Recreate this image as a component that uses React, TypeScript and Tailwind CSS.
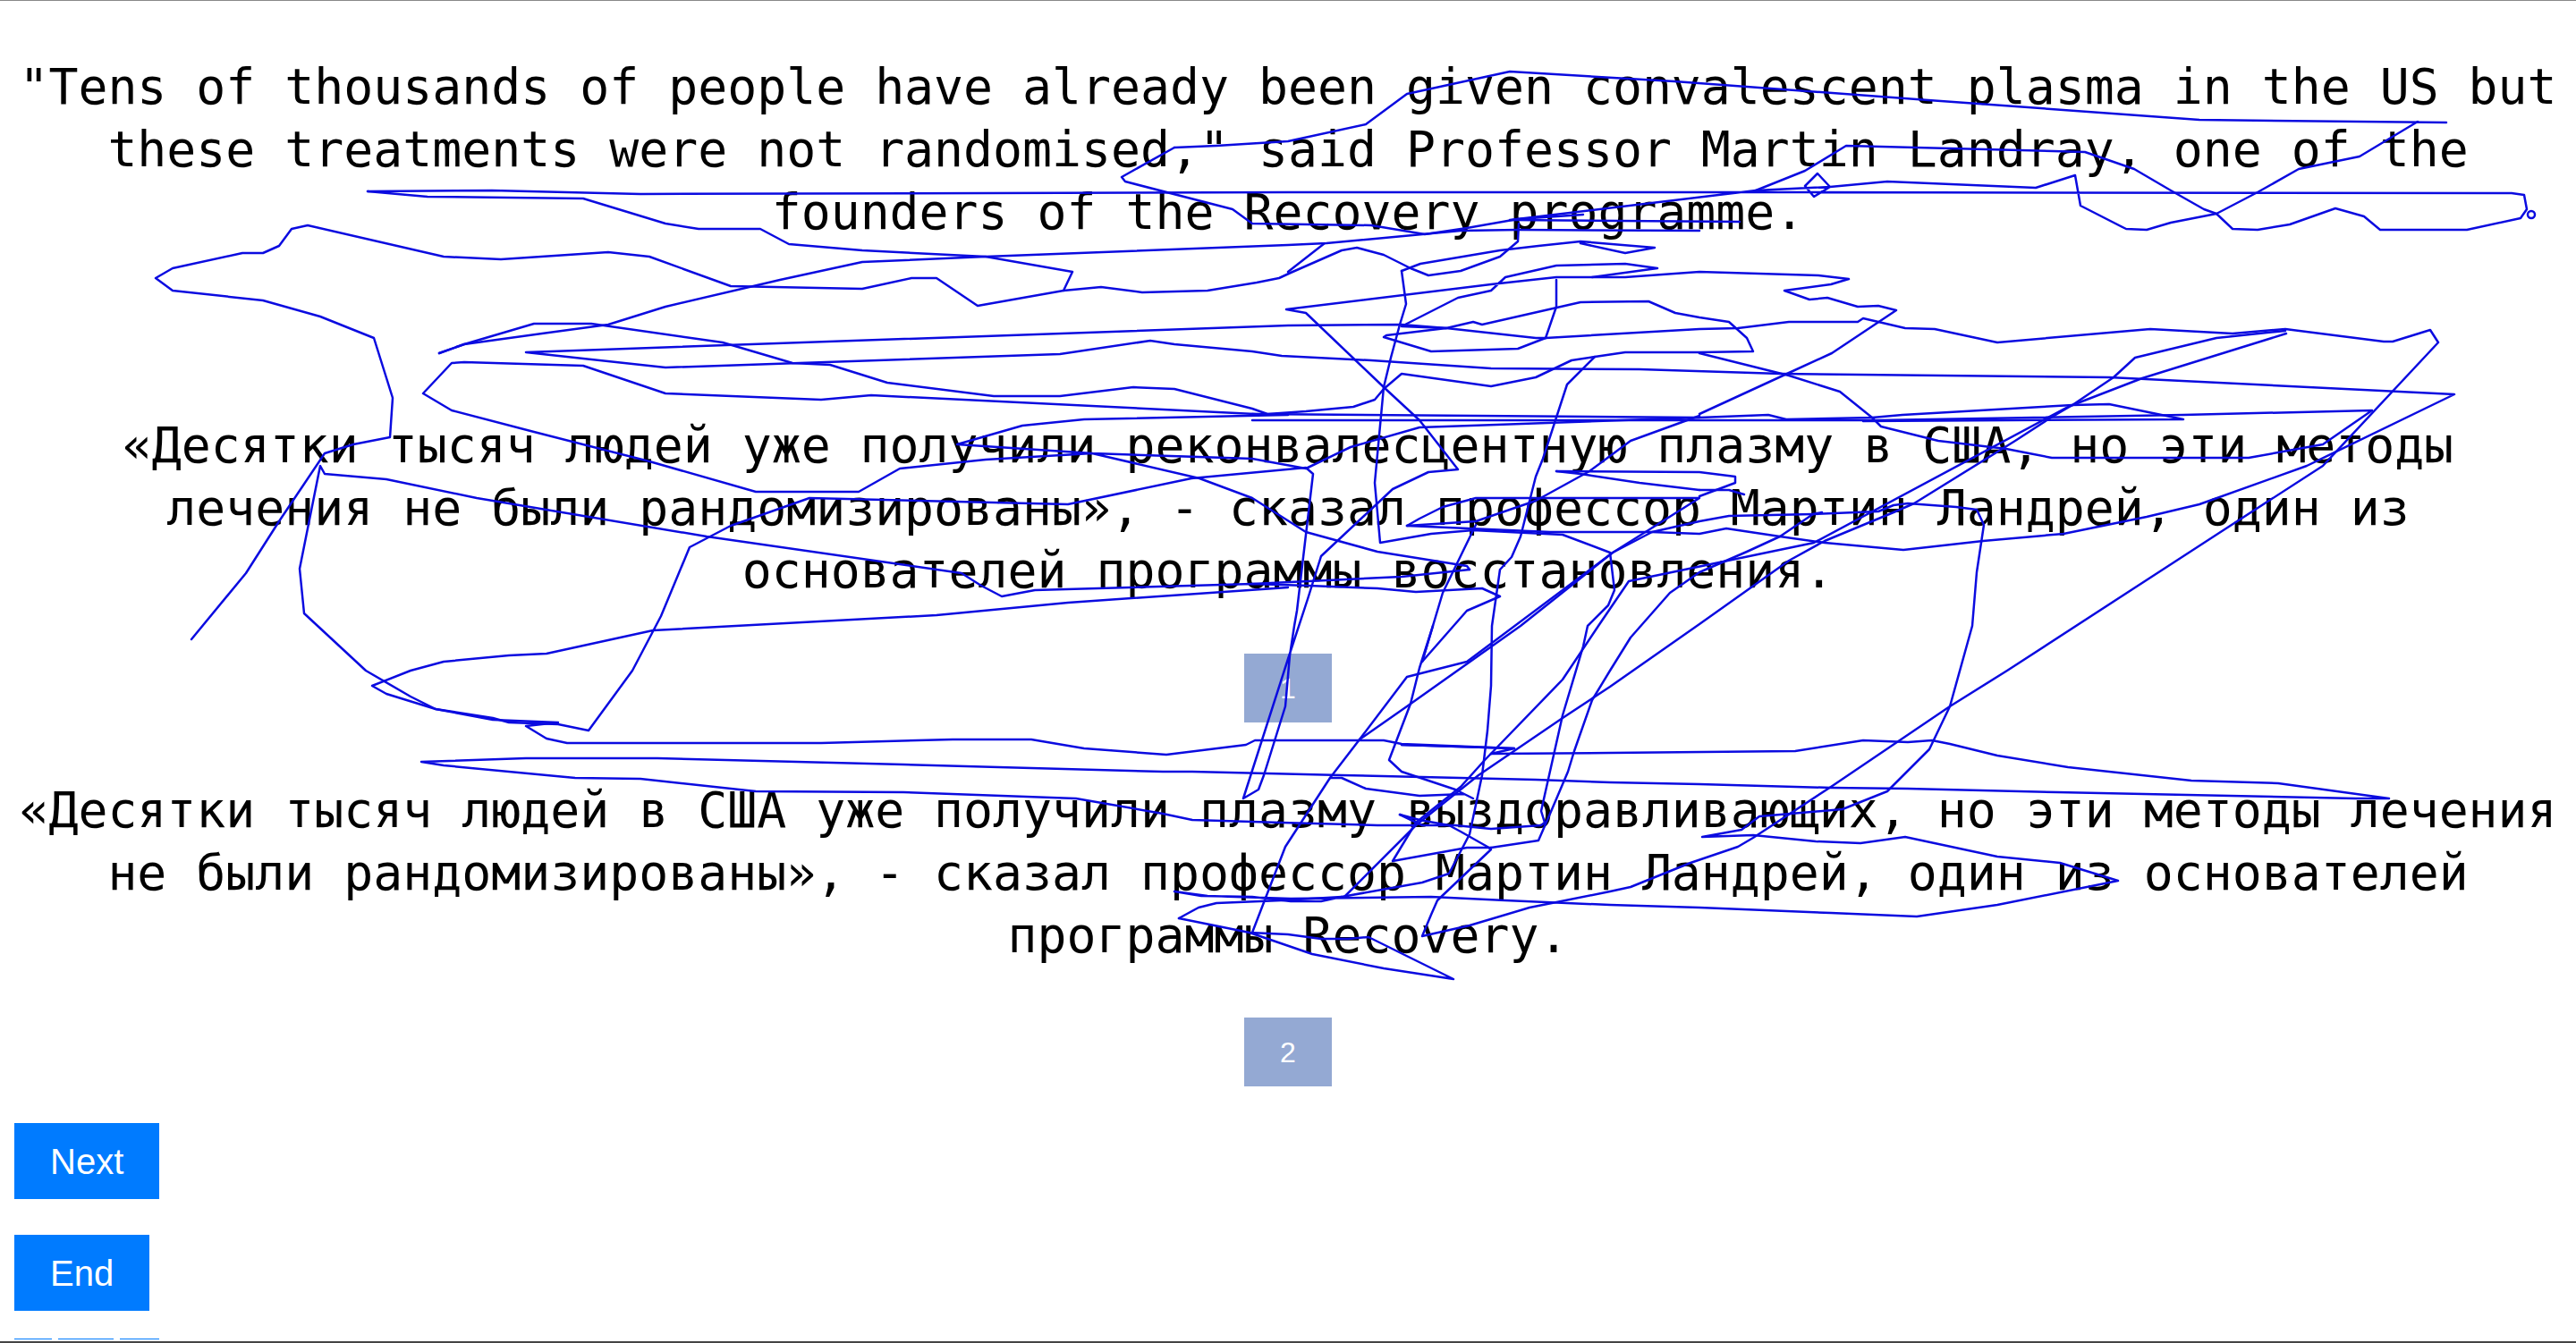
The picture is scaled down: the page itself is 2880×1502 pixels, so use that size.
// Sentence cards with a freehand scribble drawn over them
const SCRIBBLE: string[] = [
	'411,214 550,213 716,217 1440,215 1963,215 2808,216 2822,218 2825,234 2818,244 2758,257 2661,257 2643,242 2611,233 2560,251 2524,257 2496,256 2478,239 2427,249 2400,257 2377,256 2326,230 2320,196 2276,210 2110,203 2046,209 2032,194 2018,208 2028,220 2046,209 1963,213 1688,246 1945,248',
	'2703,136 2638,175 2570,189 2524,215 2478,239 2464,234 2427,213 2386,189 2331,170 2064,163 2018,191 1963,213',
	'1313,165 1360,163 1440,158 1527,139 1573,105 1688,80 1872,91 2156,112 2459,134 2735,137',
	'1313,165 1254,198 1258,203 1378,234 1400,250 1533,252 1593,262 1640,255 1697,245 1770,240',
	'491,395 519,385 606,373 680,363 744,343 872,313 964,293 1102,287 1440,274 1483,272 1633,258 1697,257 1900,258',
	'491,395 519,385 597,362 661,362 808,383 886,406 928,408 992,428 1111,443 1185,443 1267,433 1313,435 1400,457 1417,463 1460,460 1513,455 1537,447 1547,435 1567,418 1617,425 1667,432 1717,422 1757,403 1783,399 1817,394 1900,394 1960,393 1953,378 1933,360 1900,355 1873,350 1843,337 1767,338 1657,363 1647,360 1617,367 1567,365 1630,333 1667,325 1683,310 1740,297 1817,295 1853,300 1780,310 1740,310 1667,318 1438,346 1460,350 1547,433 1587,470 1630,525 1597,528 1557,547 1477,622 1462,670 1440,737 1390,893 1407,883 1413,867 1437,790 1442,733 1447,700 1450,683 1468,530 1460,523 1332,535 1194,564 905,557 817,588 771,612 739,689 707,750 658,817 624,810 569,808 551,803 487,793 432,776 416,767 459,750 496,740 569,733 611,731 730,705 1047,688 1194,674 1440,657',
	'411,214 478,220 652,222 744,250 781,256 850,256 882,273 964,280 1102,287 1199,304 1189,325 1093,342 1047,311 1019,311 964,323 817,320 726,287 680,282 560,290 496,287 344,252 326,256 312,275 294,283 271,283 193,300 174,311 193,325 294,336 358,354 418,378 439,445 436,489 395,497 363,507 312,583 275,641 214,715',
	'1189,325 1231,321 1277,327 1350,325 1405,316 1430,311 1443,305 1500,280 1517,277 1547,285 1577,300 1597,308 1633,303 1677,287 1697,270 1698,250',
	'1440,304 1481,272',
	'1567,303 1588,295 1677,280 1720,275 1767,270 1850,277 1817,283 1767,272',
	'1567,303 1572,340 1565,363 1555,400 1547,433 1537,540 1543,607 1600,597 1647,593 1747,598 1800,618 1805,660 1798,677 1775,700 1770,723 1747,800 1723,907 1727,920 1723,923 1667,927 1627,923 1590,923 1565,911',
	'1783,399 1752,430 1725,513 1717,533 1700,600 1690,623 1677,637 1668,700 1667,767 1663,817 1657,867 1643,933 1620,977 1590,987 1500,1003 1477,1008 1443,1008 1400,1003 1343,1002 1313,997 1350,1002 1443,1005 1600,1003 1683,1007 1800,1012 1900,1015 2047,1021 2143,1025 2233,1012 2368,985 2303,965 2233,958 2130,936 2080,943 2030,941 1960,934 1903,936 1947,928 1967,913 2060,905 2110,885 2157,838 2180,790 2205,700 2210,640 2218,587 2210,570 2187,567 2133,563 2117,565 2100,572 2027,575 1933,577 1900,583 1847,595 1803,618 1640,740 1573,757 1520,827 1487,870 1437,947 1400,1043',
	'1573,588 1587,580 1613,567 1650,557 1717,557 1900,557 1803,618 1700,700 1573,790 1520,827',
	'1573,588 1733,595 1847,595 1900,597 1930,591 1990,600 2040,607 2128,615 2217,605 2307,597 2400,578 2459,564 2579,521 2744,441 2358,422 1991,418 1833,413 1667,412 1533,403 1433,398 1400,393 1313,385 1286,381 1185,396 744,411 652,401 588,394 1440,364 1567,363 1617,367 1717,378 1728,378 1740,343 1740,313',
	'1728,378 1697,390 1600,393 1547,377 1550,375 1617,367',
	'1728,378 1900,368 1943,367 2000,360 2077,360 2083,356 2130,367 2163,368 2233,383 2404,368 2496,373 2555,368 2665,382 2675,382 2717,369 2726,383 2597,521 2478,598 2244,750 2180,790 2047,880 1960,937 1943,947 1890,965 1823,992 1800,997 1710,1015 1643,1035 1590,1047 1600,1023 1607,1007 1667,950 1663,947 1633,930 1620,923 1587,917 1565,911',
	'1590,740 1613,663 1647,593 1650,587',
	'1590,740 1602,700 1587,747 1577,787 1553,850 1567,863 1627,883 1647,893 1637,888 1587,890 1527,882 1500,870 1487,870',
	'1590,740 1640,683 1677,667 1657,658 1583,662 1540,658 1463,655 1400,653 1157,660 1120,667 1097,655 1075,641 790,600 533,557 432,536 363,530 358,521 335,636 340,686 409,750 459,779 487,793 551,805 624,808 588,812 611,826 634,831 918,831 1065,827 1153,827 1212,837 1304,844 1393,833 1403,828 1547,828 1567,832 1693,837 1567,833',
	'1643,637 1640,633 1540,617 1460,595 1400,557 1341,535 1221,507 1070,497 1143,476 1212,469 1440,464 1423,464 974,442 918,447 744,440 652,409 519,405 505,406 473,440 505,459 597,483 726,516 845,550 960,550 1006,524 1102,514 1221,507 1400,513 1460,524 1510,500 1587,478 1900,467',
	'1643,637 1567,645 1400,653',
	'1667,948 1640,948 1557,963 1583,920 1633,880 1660,850 1747,760 1787,700 1821,650 2028,607 2312,455 2395,423 2556,373',
	'1503,1003 1583,923 1653,867 1747,803 1800,768 1900,698 2000,627 2040,605 2117,573 2140,563 2253,493 2293,467 2317,453 2363,422 2387,400 2478,378 2555,370',
	'2037,573 2027,575 1990,600 1953,617 1900,640 1867,663 1823,713 1800,750 1780,783 1760,840 1753,863 1733,910 1720,940 1667,948',
	'1900,465 1823,493 1777,527 1717,560 1650,583 1573,588',
	'1740,527 1900,528 1940,533 1940,540 1900,555',
	'1900,548 1833,540 1767,530 1740,527',
	'1900,548 1933,548 1950,553',
	'1400,470 1900,470 2100,470 2441,464 2652,459 2597,497 2514,512 2294,512 2243,502 2167,493 2103,477 2093,467 2057,438 2000,420 1900,395',
	'1400,463 1900,467 1977,464 1997,469 2093,467 2127,464 2283,455 2317,453 2358,452 2441,469 2083,471',
	'1900,463 2000,417 2048,395 2120,347 2100,342 2077,343 2043,333 2023,335 1995,325 2047,318 2067,312 2033,308 1900,304 1817,310 1780,310',
	'1667,843 1800,842 2007,840 2083,828 2133,830 2160,828 2180,832 2233,845 2312,858 2450,873 2547,876 2671,893 2634,893 2300,886 2133,882 2047,881 1900,877 1800,875 1717,872 1633,870 1500,867 1333,863 1300,863 1010,855 735,848 588,848 471,852 496,856 643,870 716,871 845,885 1010,886 1203,893 1300,910 1333,917 1433,920 1540,923 1583,923',
	'1567,833 1693,837 1667,843',
	'1318,1027 1340,1015 1360,1010 1433,1007 1500,1003',
	'1318,1027 1397,1043 1467,1067 1547,1083 1625,1095 1530,1048 1507,1050 1477,1050 1440,1045 1397,1043',
];

function Sentence({ children }: { children: string }) {
	return (
		<p className="text-center font-['DejaVu_Sans_Mono',monospace] text-[54.8px] leading-[70px] text-black">
			{children}
		</p>
	);
}

function NumberBox({ n }: { n: string }) {
	return (
		<div className="mx-auto flex h-[77px] w-[98px] items-center justify-center bg-[#94a9d3] text-[32px] text-white">
			{n}
		</div>
	);
}

function ActionButton({ label }: { label: string }) {
	return (
		<button className="block h-[85px] bg-[#007bff] px-10 text-[40px] text-white">
			{label}
		</button>
	);
}

export default function App() {
	return (
		<div className="relative h-[1502px] overflow-hidden border-t border-[#888888] bg-white px-4 pt-[61px] font-['Liberation_Sans',sans-serif]">
			<Sentence>
				"Tens of thousands of people have already been given convalescent plasma in the US but these treatments were not randomised," said Professor Martin Landray, one of the founders of the Recovery programme.
			</Sentence>

			<div className="mt-[191px]">
				<Sentence>
					«Десятки тысяч людей уже получили реконвалесцентную плазму в США, но эти методы лечения не были рандомизированы», - сказал профессор Мартин Ландрей, один из основателей программы восстановления.
				</Sentence>
			</div>
			<div className="mt-[58px]">
				<NumberBox n="1" />
			</div>

			<div className="mt-[63px]">
				<Sentence>
					«Десятки тысяч людей в США уже получили плазму выздоравливающих, но эти методы лечения не были рандомизированы», - сказал профессор Мартин Ландрей, один из основателей программы Recovery.
				</Sentence>
			</div>
			<div className="mt-[57px]">
				<NumberBox n="2" />
			</div>

			<div className="mt-[41px] flex flex-col items-start gap-10">
				<ActionButton label="Next" />
				<ActionButton label="End" />
				{/* top edge of a third button, cut off by the window */}
				<div className="-mt-[9px] flex h-px w-[162px] gap-[7px]">
					<div className="w-[42px] bg-[#007bff]" />
					<div className="w-[62px] bg-[#007bff]" />
					<div className="flex-1 bg-[#007bff]" />
				</div>
			</div>

			{/* freehand annotation over the page */}
			<svg
				className="pointer-events-none absolute left-0 -top-px"
				width={2880}
				height={1502}
				viewBox="0 0 2880 1502"
				fill="none"
				stroke="#0b0be0"
				strokeWidth={2.5}
				strokeLinejoin="round"
				strokeLinecap="round"
			>
				{SCRIBBLE.map((pts, i) => (
					<polyline key={i} points={pts} />
				))}
				<circle cx={2830} cy={240} r={4} />
			</svg>

			<div className="absolute inset-x-0 bottom-0 h-[2px] bg-[#444444]" />
		</div>
	);
}
